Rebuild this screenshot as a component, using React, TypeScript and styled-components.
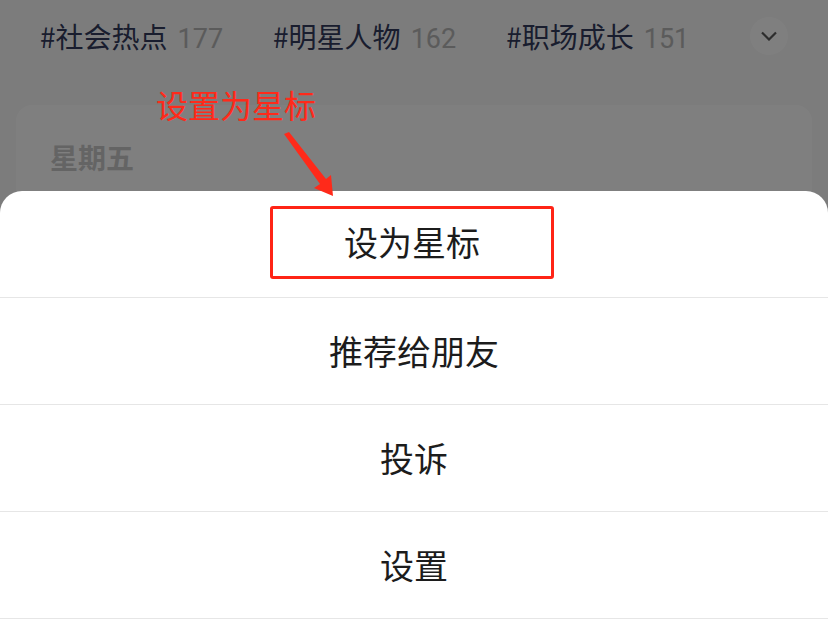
import styled, { createGlobalStyle } from 'styled-components'

const GlobalStyle = createGlobalStyle`
  html, body {
    margin: 0;
    padding: 0;
    background: #f8f8f8;
    font-family: 'Noto Sans CJK SC', 'Noto Sans', sans-serif;
  }
  * { box-sizing: border-box; }
`

const Screen = styled.div`
  position: relative;
  width: 828px;
  height: 624px;
  overflow: hidden;
  background: #f8f8f8;
`

const Page = styled.div`
  padding: 16px 16px;
`

const TagRow = styled.div`
  display: flex;
  align-items: center;
  gap: 50px;
  height: 40px;
  padding: 0 24px 0 24px;
`

const Tag = styled.div`
  display: flex;
  align-items: baseline;
  gap: 10px;
  font-size: 28px;
  color: #333a5c;
  white-space: nowrap;
`

const TagCount = styled.span`
  font-family: Roboto, 'Liberation Sans', sans-serif;
  font-size: 27px;
  color: #b6b6b6;
`

const MoreButton = styled.div`
  margin-left: auto;
  width: 38px;
  height: 38px;
  border-radius: 50%;
  background: #ffffff;
  display: flex;
  align-items: center;
  justify-content: center;
`

const Card = styled.div`
  margin-top: 49px;
  height: 400px;
  background: #ffffff;
  border-radius: 16px;
  padding: 38px 34px;
`

const CardTitle = styled.div`
  font-size: 28px;
  line-height: 1;
  font-weight: 700;
  color: #c9c9c9;
`

const Mask = styled.div`
  position: absolute;
  inset: 0;
  background: rgba(0, 0, 0, 0.5);
`

const Sheet = styled.div`
  position: absolute;
  left: 0;
  right: 0;
  top: 191px;
  bottom: -40px;
  background: #ffffff;
  border-radius: 22px 22px 0 0;
`

const SheetRow = styled.div`
  height: 107px;
  display: flex;
  align-items: center;
  justify-content: center;
  border-bottom: 1px solid #e6e6e6;
  font-size: 34px;
  line-height: 40px;
  color: #1c1c1c;
`

const Highlight = styled.div<{ $on: boolean }>`
  width: 284px;
  height: 73px;
  display: flex;
  align-items: center;
  justify-content: center;
  margin-top: -4px;
  margin-left: -4px;
  border: 3px solid ${(p) => (p.$on ? '#ff2416' : 'transparent')};
  border-radius: 3px;
`

const Note = styled.div`
  position: absolute;
  left: 156px;
  top: 84px;
  font-size: 32px;
  line-height: 40px;
  color: #ff2a1a;
`

const Arrow = styled.svg`
  position: absolute;
  left: 0;
  top: 0;
  pointer-events: none;
`

const actions = ['设为星标', '推荐给朋友', '投诉', '设置']

export default function App() {
  return (
    <Screen>
      <GlobalStyle />
      <Page>
        <TagRow>
          <Tag>#社会热点<TagCount>177</TagCount></Tag>
          <Tag>#明星人物<TagCount>162</TagCount></Tag>
          <Tag>#职场成长<TagCount>151</TagCount></Tag>
          <MoreButton>
            <svg width="18" height="10" viewBox="0 0 18 10">
              <path d="M2 1.5 L9 8.5 L16 1.5" fill="none" stroke="#5a5a5a" strokeWidth="2.2" />
            </svg>
          </MoreButton>
        </TagRow>
        <Card>
          <CardTitle>星期五</CardTitle>
        </Card>
      </Page>
      <Mask />
      <Sheet>
        {actions.map((a, i) => (
          <SheetRow key={a}>
            {i === 0 ? <Highlight $on>{a}</Highlight> : a}
          </SheetRow>
        ))}
      </Sheet>
      <Note>设置为星标</Note>
      <Arrow width="828" height="624">
        <polygon points="284,134 289,132 326,179 331,175 333,196 314,188 320,184" fill="#ff2a1a" />
      </Arrow>
    </Screen>
  )
}
